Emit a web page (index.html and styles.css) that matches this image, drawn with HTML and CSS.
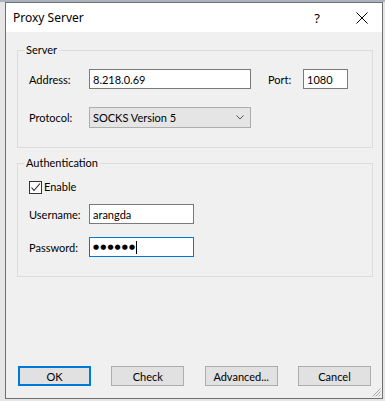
FILE: index.html
```html
<!DOCTYPE html>
<html>
<head>
<meta charset="utf-8">
<title>Proxy Server</title>
<link rel="stylesheet" href="styles.css">
</head>
<body>
<div class="win">
  <div class="titlebar">
    <span class="title">Proxy Server</span>
    <span class="help">?</span>
    <svg class="close" width="12" height="12" viewBox="0 0 12 12"><path d="M0.5 0.5 L11.5 11.5 M11.5 0.5 L0.5 11.5" stroke="#000" stroke-width="1" fill="none"/></svg>
  </div>
  <div class="client">
    <fieldset class="group server">
      <legend>Server</legend>
      <div class="row">
        <span class="lbl">Address:</span>
        <span class="edit addr">8.218.0.69</span>
        <span class="lbl port-lbl">Port:</span>
        <span class="edit port">1080</span>
      </div>
      <div class="row row-proto">
        <span class="lbl">Protocol:</span>
        <span class="combo"><span>SOCKS Version 5</span><svg class="chev" width="8" height="5" viewBox="0 0 8 5"><path d="M0.5 0.5 L4 4 L7.5 0.5" stroke="#555" stroke-width="1" fill="none"/></svg></span>
      </div>
    </fieldset>
    <fieldset class="group auth">
      <legend>Authentication</legend>
      <div class="check-row">
        <span class="checkbox"><svg width="11" height="11" viewBox="0 0 11 11"><path d="M1.5 5.5 L4 8.5 L10 1.5" stroke="#222" stroke-width="1.1" fill="none"/></svg></span>
        <span class="check-lbl">Enable</span>
      </div>
      <div class="row row-user">
        <span class="lbl">Username:</span>
        <span class="edit user">arangda</span>
      </div>
      <div class="row row-pass">
        <span class="lbl">Password:</span>
        <span class="edit user focus"><span class="dots">●●●●●●</span><span class="caret"></span></span>
      </div>
    </fieldset>
    <div class="buttons">
      <button class="btn default">OK</button>
      <button class="btn">Check</button>
      <button class="btn">Advanced...</button>
      <button class="btn">Cancel</button>
    </div>
    <svg class="grip" width="10" height="10" viewBox="0 0 10 10"><path d="M9.5 1.5 L1.5 9.5 M9.5 4.5 L4.5 9.5 M9.5 7.5 L7.5 9.5" stroke="#a8a8a8" stroke-width="1" fill="none"/></svg>
  </div>
</div>
</body>
</html>
```
FILE: styles.css
```css
html, body {
  margin: 0;
  height: 100%;
}
body {
  box-sizing: border-box;
  padding: 2px 0 0 5px;
  background: linear-gradient(#a9b3bf 0 2px, #e6e6e6 2px);
  font-family: Lato, "Noto Sans", sans-serif;
  font-size: 11px;
  color: #000;
  overflow: hidden;
}
.win {
  width: 378px;
  height: 397px;
  box-sizing: border-box;
  border: 1px solid #707070;
  background: #f0f0f0;
  display: flex;
  flex-direction: column;
}
.titlebar {
  flex: none;
  height: 29px;
  background: #fff;
  display: flex;
  align-items: center;
  padding-left: 7px;
}
.title {
  flex: 1;
  font-family: "Noto Sans", sans-serif;
  font-size: 12px;
}
.help {
  font-family: "Noto Sans", sans-serif;
  font-size: 13px;
  margin-right: 36px;
}
.close {
  margin-right: 14px;
}
.client {
  flex: 1;
  position: relative;
  display: flex;
  flex-direction: column;
  padding-left: 11px;
}
.group {
  margin: 0;
  width: 356px;
  min-width: 0;
  box-sizing: border-box;
  border: 1px solid #dcdcdc;
}
legend {
  margin-left: -5px;
  padding: 0 2px;
  line-height: 16px;
}
.server {
  margin-top: 10px;
  padding: 11px 0 19px 11px;
}
.row {
  display: flex;
  align-items: center;
  height: 20px;
}
.lbl {
  width: 60px;
  flex: none;
}
.edit {
  box-sizing: border-box;
  height: 20px;
  border: 1px solid #7a7a7a;
  background: #fff;
  padding-left: 3px;
  display: flex;
  align-items: center;
}
.addr {
  width: 162px;
}
.port-lbl {
  width: 35px;
  margin-left: 17px;
}
.port {
  width: 45px;
}
.row-proto {
  margin-top: 18px;
  height: 21px;
}
.combo {
  box-sizing: border-box;
  width: 162px;
  height: 21px;
  border: 1px solid #adadad;
  background: #e5e5e5;
  padding: 0 6px 0 3px;
  display: flex;
  align-items: center;
  justify-content: space-between;
}
.auth {
  margin-top: 7px;
  padding: 8px 0 19px 11px;
}
.check-row {
  display: flex;
  align-items: flex-start;
  height: 16px;
}
.checkbox {
  box-sizing: border-box;
  width: 13px;
  height: 13px;
  margin-top: 2px;
  border: 1px solid #333;
  background: #fff;
  display: flex;
}
.check-lbl {
  margin-left: 2px;
  line-height: 16px;
}
.row-user {
  margin-top: 9px;
}
.row-pass {
  margin-top: 13px;
}
.user {
  width: 105px;
}
.focus {
  border-color: #0078d7;
}
.dots {
  font-family: "DejaVu Sans", sans-serif;
  font-size: 7px;
  letter-spacing: 1.1px;
}
.caret {
  width: 1px;
  height: 13px;
  background: #000;
}
.buttons {
  margin-top: auto;
  margin-bottom: 12px;
  margin-left: 1px;
  width: 353px;
  display: flex;
  justify-content: space-between;
}
.btn {
  width: 73px;
  height: 20px;
  padding: 0;
  border: 1px solid #adadad;
  background: #e1e1e1;
  font: inherit;
  color: #000;
}
.btn.default {
  border: 2px solid #0078d7;
}
.grip {
  position: absolute;
  right: 1px;
  bottom: 1px;
}
```
